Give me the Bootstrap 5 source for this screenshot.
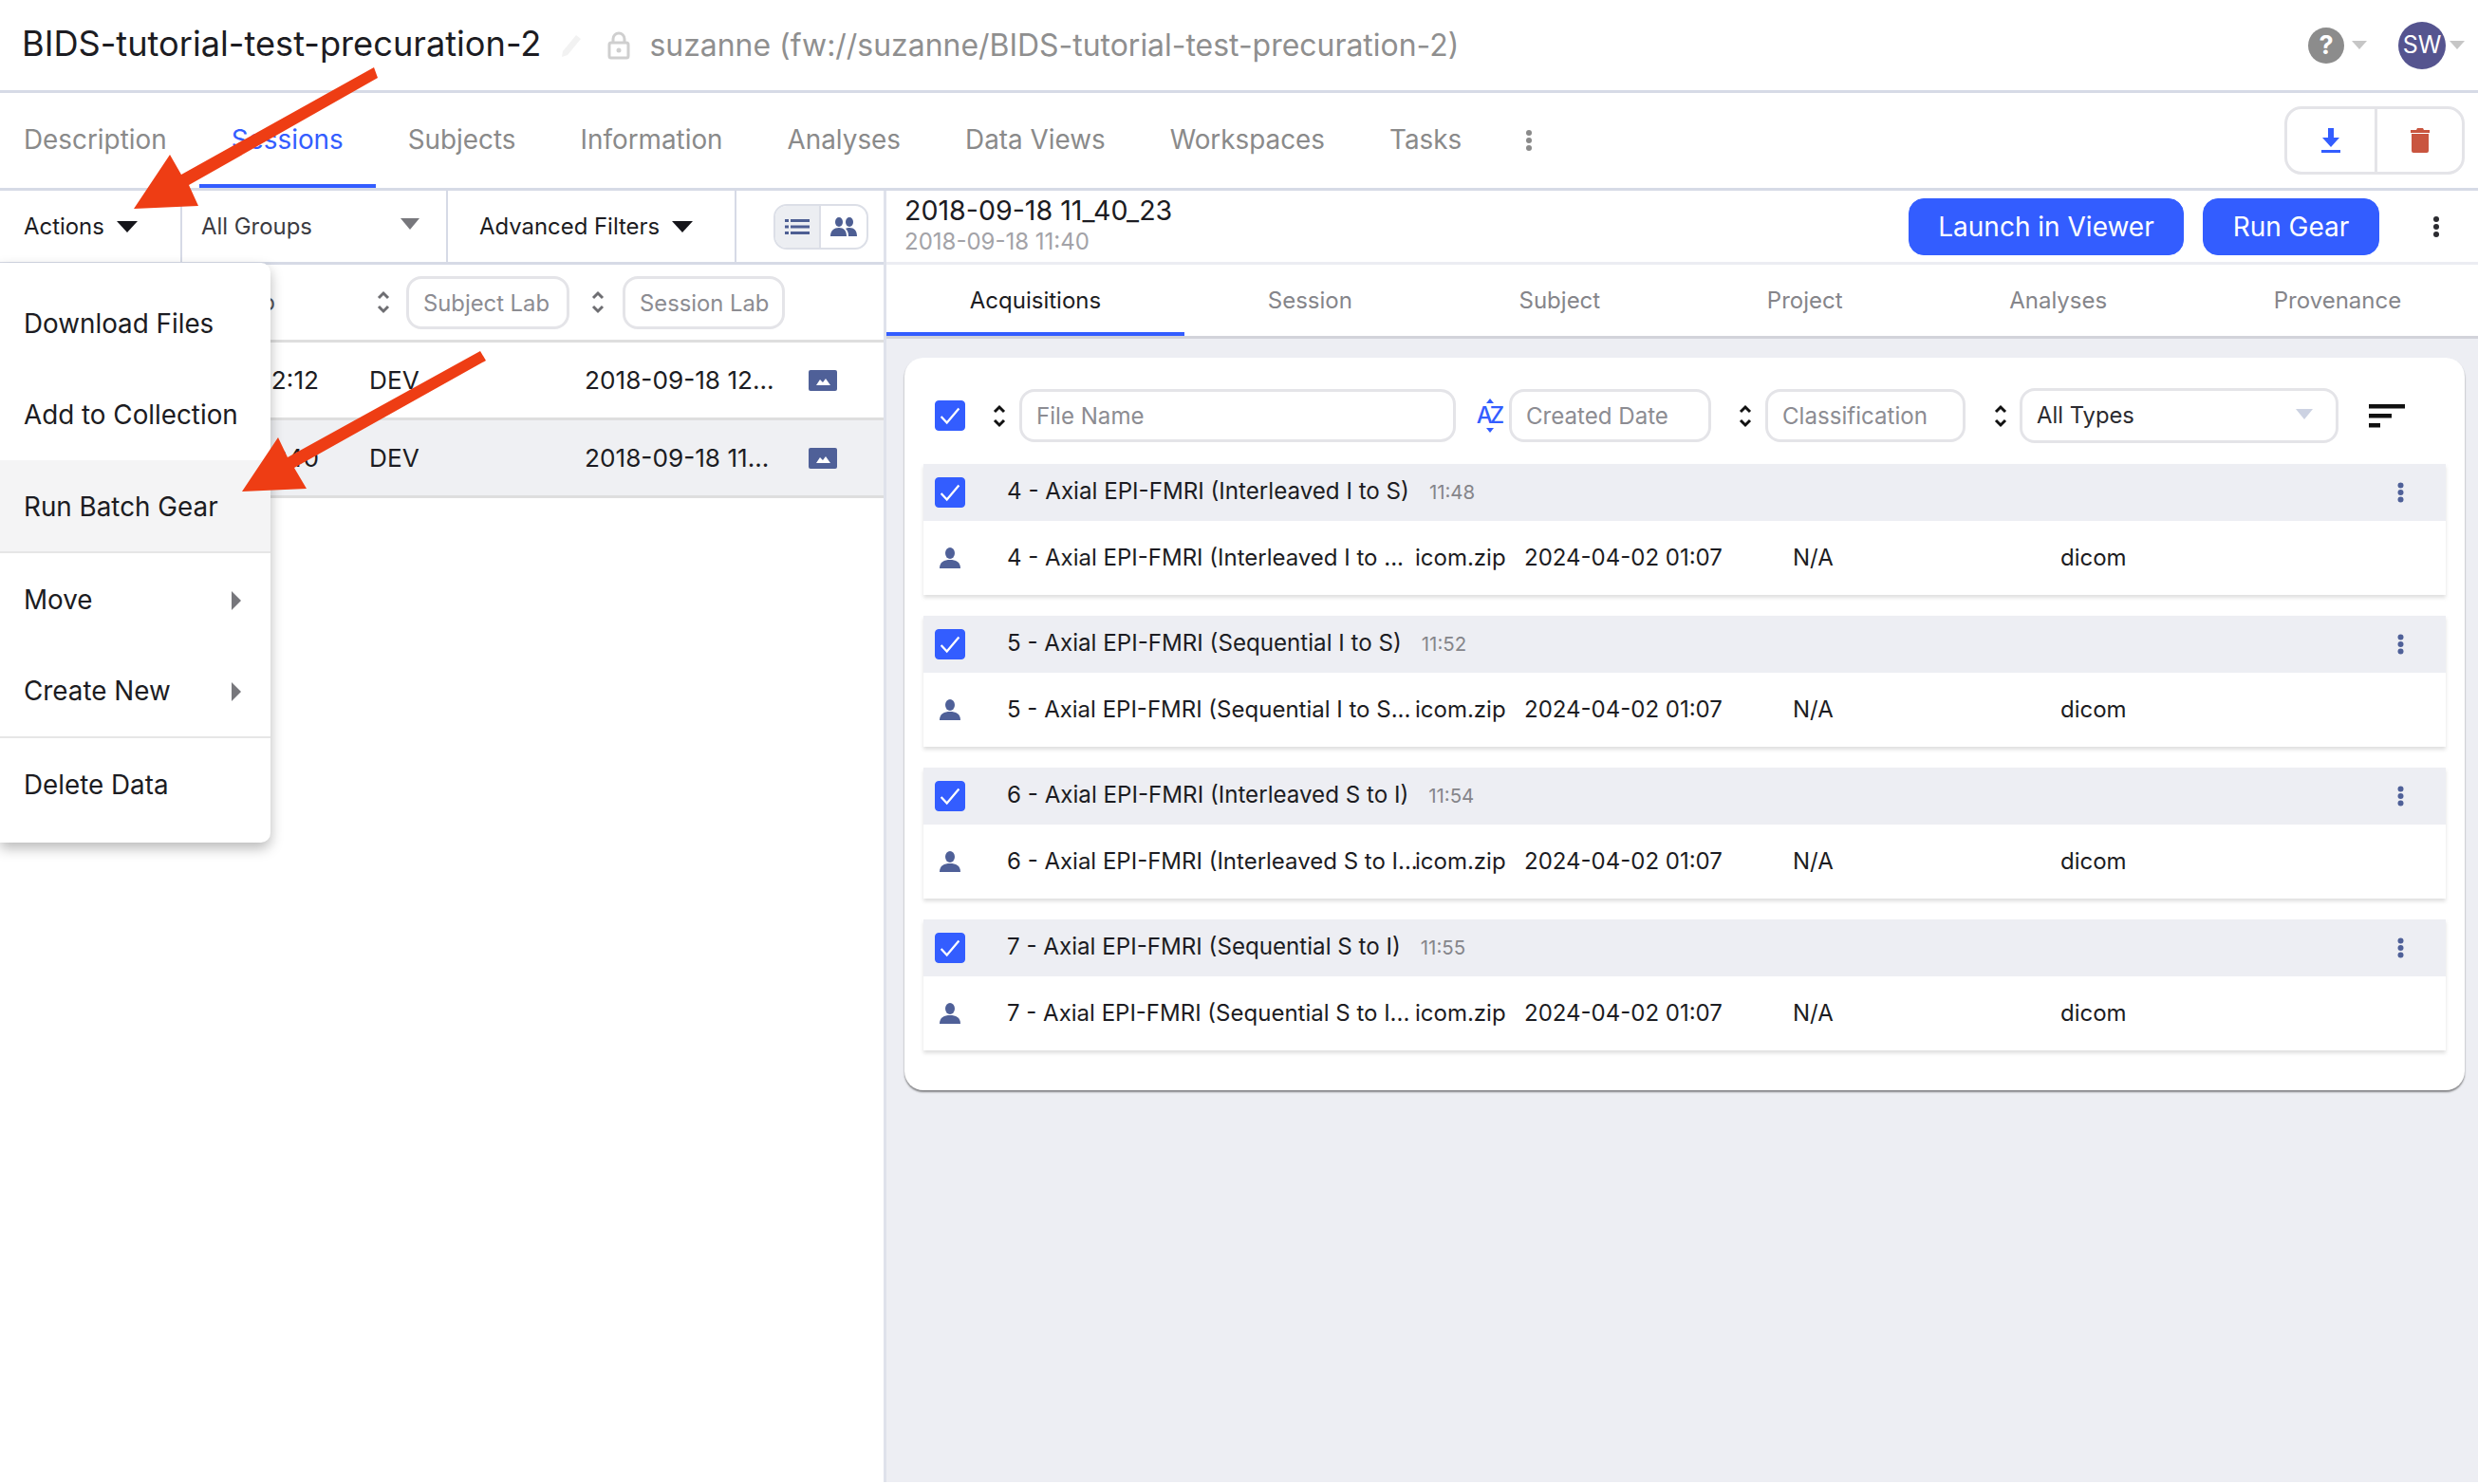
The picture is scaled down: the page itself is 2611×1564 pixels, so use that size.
<!DOCTYPE html>
<html lang="en">
<head>
<meta charset="utf-8">
<title>BIDS-tutorial-test-precuration-2</title>
<link href="https://cdn.jsdelivr.net/npm/bootstrap@5.3.0/dist/css/bootstrap.min.css" rel="stylesheet">
<style>
html,body{height:100%;}
body{font-family:Inter,"Noto Sans",sans-serif;color:#1c1c22;font-size:24px;width:2611px;height:1564px;overflow:hidden;background:#fff;}
.top-bar{height:98px;border-bottom:3px solid #d6dae6;padding-left:23px;}
.proj-title{font-size:36.2px;line-height:1;margin-bottom:3px;}
.proj-path{font-size:31.95px;color:#8f8f8f;line-height:1;}
.ic-pencil{margin-left:20px;}
.ic-lock{margin-left:26px;margin-right:20px;}
.help-dot{width:38px;height:38px;border-radius:50%;background:#8c8c8c;color:#fff;font-size:27px;font-weight:700;line-height:1;}
.mini-tri{width:0;height:0;border-left:8px solid transparent;border-right:8px solid transparent;border-top:9px solid #c6c6c6;}
.avatar-dot{width:50px;height:50px;border-radius:50%;background:#55548f;color:#fff;font-size:25px;line-height:1;}
.ml-b{margin-left:33px;}
.mr-a{margin-right:14px;}
.tab-bar{height:103px;border-bottom:3px solid #d6dae6;padding-left:25px;padding-right:14px;}
.tab-bar .nav-link{color:#8a8a8a;font-size:27.85px;padding:0 34px;height:100px;line-height:98px;border-bottom:4px solid transparent;}
.tab-bar .nav-item:first-child .nav-link{padding-left:0;}
.tab-bar .nav-link.active{color:#335dff;border-bottom-color:#335dff;}
.kebab-top{margin-left:33px;}
.act-group{border:3px solid #e4e4e8;border-radius:18px;height:72px;width:190px;}
.act-cell{width:50%;height:100%;}
.act-cell+.act-cell{border-left:3px solid #e4e4e8;}
.work{height:1361px;}
.left-col{width:934px;border-right:3px solid #dfe2eb;flex:none;}
.tool-row{height:78px;border-bottom:3px solid #d6dae6;font-size:23.9px;}
.tool-cell{height:100%;border-right:2px solid #d6dae6;}
.c-act{width:192px;padding-left:25px;}
.c-grp{width:280px;padding-left:20px;padding-right:28px;color:#3b3b42;}
.c-adv{width:304px;padding-left:33px;}
.tri-d{width:0;height:0;border-left:11px solid transparent;border-right:11px solid transparent;border-top:12px solid #15151a;margin-left:13px;}
.tri-g{border-left-width:10px;border-right-width:10px;border-top-color:#77777c;margin-bottom:6px;}
.view-tog{margin-left:39px;width:100px;height:48px;border:2px solid #dcdfe7;border-radius:14px;overflow:hidden;}
.view-tog>div{width:50%;height:100%;}
.view-on{background:#eceef2;border-right:2px solid #dcdfe7;}
.filter-row{height:82px;border-bottom:3px solid #dedede;}
.filter-lab{width:290px;text-align:right;margin-right:107px;color:#55555a;white-space:nowrap;}
.fld{border:3px solid #e4e4e8;border-radius:16px;height:56px;padding:2px 15px 0;font-size:24.1px;color:#8c8c92;background:#fff;width:auto;line-height:1;display:flex;align-items:center;white-space:nowrap;}
.fld-subj{width:172px;margin-left:17px;font-size:23.8px;}
.fld-sess{width:171px;margin-left:19px;font-size:23.8px;}
.sort-gap{margin-left:23px;}
.sess-row{height:82px;border-bottom:3px solid #dedede;display:grid;grid-template-columns:389px 227px 236px 30px;align-items:center;font-size:26.2px;}
.sess-row.picked{background:#eff0f3;}
.sess-time{text-align:right;padding-right:53px;white-space:nowrap;overflow:hidden;}
.act-menu{left:0;top:76px;width:285px;padding:15px 0 14px;border:0;border-radius:0 10px 10px 0;box-shadow:0 6px 14px rgba(0,0,0,.28);z-index:20;margin:0;}
.act-menu .dropdown-item{height:96.4px;padding:3px 31px 0 25px;font-size:27.8px;color:#1c1c22;display:flex;align-items:center;justify-content:space-between;}
.act-menu .dropdown-item.hovered{background:#f4f4f5;}
.act-menu .dropdown-divider{margin:0;border-top:2px solid #e6e6e6;opacity:1;}
.tri-r{width:0;height:0;border-top:10px solid transparent;border-bottom:10px solid transparent;border-left:10px solid #77777c;}
.right-col{background:#edeef3;min-width:0;overflow:hidden;}
.ses-head{height:78px;background:#fff;border-bottom:3px solid #ecedf2;padding-left:19px;padding-right:40px;}
.ses-id{margin-bottom:2px;}
.ses-name{font-size:28.6px;line-height:34px;}
.ses-date{font-size:24px;line-height:30px;color:#a3a3a8;margin-top:1px;}
.btn-go{background:#335dff;border-color:#335dff;border-radius:16px;height:60px;font-size:28px;padding:0;line-height:1;}
.btn-view{width:290px;}
.btn-run{width:186px;margin-left:20px;margin-right:56px;}
.sub-tabs{height:78px;width:calc(100% + 7px);background:#fff;border-bottom:3px solid #d2d3da;}
.sub-tabs .nav-link{color:#85858a;font-size:24px;height:75px;line-height:76px;padding:0;border-bottom:4px solid transparent;}
.sub-tabs .nav-link.active{color:#1c1c22;border-bottom-color:#335dff;}
.acq-card{margin:20px 14px 0 19px;padding:0 20px 42px;border:0;border-radius:20px;box-shadow:0 2px 2px rgba(0,0,0,.45);background:#fff;}
.acq-filter{height:112px;padding-left:12px;padding-top:10px;}
.form-check-input.tick{width:32px;height:32px;margin:0;border-radius:4px;background-color:#335dff;border-color:#335dff;background-size:100% 100%;background-image:url("data:image/svg+xml,%3csvg xmlns='http://www.w3.org/2000/svg' viewBox='0 0 32 32'%3e%3cpath fill='none' stroke='%23fff' stroke-width='2.4' d='M6 17l6.500 7L26 8'/%3e%3c/svg%3e");flex:none;}
.s-arrow{margin-left:29px;}
.fld-file{width:460px;margin-left:14px;}
.az-mark{width:30px;margin-left:20px;font-size:24px;line-height:1;letter-spacing:-3px;color:#335dff;position:relative;text-align:center;font-weight:500;white-space:nowrap;}
.az-mark::before,.az-mark::after{content:"";position:absolute;left:12px;width:0;height:0;border-left:4px solid transparent;border-right:4px solid transparent;}
.az-mark::before{top:-6px;border-bottom:5px solid #335dff;}
.az-mark::after{bottom:-6px;border-top:5px solid #335dff;}
.fld-date{width:213px;margin-left:6px;}
.fld-class{width:211px;margin-left:14px;}
.arr-gap1{margin-left:29px;}
.arr-gap2{margin-left:30px;}
.fld-type{width:336px;height:58px;margin-left:13px;color:#2b2b30;justify-content:space-between;padding:0 24px 0 15px;font-size:23.8px;}
.tri-pale{width:0;height:0;border-left:9px solid transparent;border-right:9px solid transparent;border-top:11px solid #ccd2e2;margin-bottom:4px;}
.lines-ic{margin-left:32px;}
.acq-box{margin-bottom:22px;box-shadow:0 3px 4px rgba(0,0,0,.13);background:#fff;}
.acq-box:last-child{margin-bottom:0;}
.acq-top{height:60px;background:#edeef3;padding:0 44px 0 12px;}
.acq-title{margin-left:44px;font-size:24.15px;margin-bottom:2px;}
.acq-time{margin-left:21px;font-size:20.4px;color:#85858a;}
.acq-line{height:78px;display:grid;grid-template-columns:88px 430px 115px 283px 282px 1fr;align-items:center;font-size:24px;white-space:nowrap;}
.acq-line svg{margin-left:17px;}
.arrow-layer{left:0;top:0;z-index:50;pointer-events:none;}
</style>
</head>
<body class="position-relative">

<header class="top-bar d-flex align-items-center">
  <span class="proj-title">BIDS-tutorial-test-precuration-2</span>
  <svg class="ic-pencil" width="24" height="26" viewBox="0 0 24 26"><path fill="#f2f2f2" d="M17 2l5 4L8 23l-6 2 1-6z"/></svg>
  <svg class="ic-lock" width="24" height="30" viewBox="0 0 24 30"><path fill="none" stroke="#cfcfcf" stroke-width="3" d="M6 12V8a6 6 0 0 1 12 0v4"/><rect x="2" y="12" width="20" height="16" rx="2" fill="none" stroke="#cfcfcf" stroke-width="3"/><circle cx="12" cy="20" r="2.5" fill="#cfcfcf"/></svg>
  <span class="proj-path">suzanne (fw://suzanne/BIDS-tutorial-test-precuration-2)</span>
  <div class="ms-auto d-flex align-items-center mr-a">
    <span class="help-dot d-flex align-items-center justify-content-center">?</span>
    <span class="mini-tri ms-2"></span>
    <span class="avatar-dot d-flex align-items-center justify-content-center ml-b">SW</span>
    <span class="mini-tri ms-1"></span>
  </div>
</header>

<nav class="tab-bar d-flex align-items-center">
  <ul class="nav">
    <li class="nav-item"><a class="nav-link" href="#">Description</a></li>
    <li class="nav-item"><a class="nav-link active" href="#">Sessions</a></li>
    <li class="nav-item"><a class="nav-link" href="#">Subjects</a></li>
    <li class="nav-item"><a class="nav-link" href="#">Information</a></li>
    <li class="nav-item"><a class="nav-link" href="#">Analyses</a></li>
    <li class="nav-item"><a class="nav-link" href="#">Data Views</a></li>
    <li class="nav-item"><a class="nav-link" href="#">Workspaces</a></li>
    <li class="nav-item"><a class="nav-link" href="#">Tasks</a></li>
  </ul>
  <svg class="kebab-top" width="8" height="24" viewBox="0 0 8 24"><g fill="#8a8a8a"><circle cx="4" cy="4" r="3"/><circle cx="4" cy="12" r="3"/><circle cx="4" cy="20" r="3"/></g></svg>
  <div class="act-group d-flex ms-auto">
    <div class="act-cell d-flex align-items-center justify-content-center">
      <svg width="22" height="26" viewBox="0 0 22 26"><path fill="#335dff" d="M8 0h6v10h6l-9 10-9-10h6zM1 23h20v3H1z"/></svg>
    </div>
    <div class="act-cell d-flex align-items-center justify-content-center">
      <svg width="20" height="26" viewBox="0 0 20 26"><path fill="#c9553f" d="M7 0h6l1 2h6v3H0V2h6zM1 6h18v18a2 2 0 0 1-2 2H3a2 2 0 0 1-2-2z"/></svg>
    </div>
  </div>
</nav>

<main class="work d-flex">
  <section class="left-col position-relative">
    <div class="tool-row d-flex align-items-center">
      <div class="tool-cell c-act d-flex align-items-center">Actions<span class="tri-d"></span></div>
      <div class="tool-cell c-grp d-flex align-items-center justify-content-between">All Groups<span class="tri-d tri-g"></span></div>
      <div class="tool-cell c-adv d-flex align-items-center">Advanced Filters<span class="tri-d"></span></div>
      <div class="view-tog d-flex">
        <div class="view-on d-flex align-items-center justify-content-center">
          <svg width="26" height="16" viewBox="0 0 26 16"><g fill="#4d5e93"><rect width="4" height="3"/><rect x="6" width="20" height="3"/><rect y="6.5" width="4" height="3"/><rect x="6" y="6.5" width="20" height="3"/><rect y="13" width="4" height="3"/><rect x="6" y="13" width="20" height="3"/></g></svg>
        </div>
        <div class="d-flex align-items-center justify-content-center">
          <svg width="30" height="20" viewBox="0 0 30 20"><g fill="#4d5e93"><ellipse cx="10" cy="5" rx="4" ry="5"/><ellipse cx="21" cy="5" rx="4" ry="5"/><path d="M1 20c0-6 4-9 9-9s8 3 8 9zM20 20c0-4-1-6-3-8 1-1 3-1 4-1 5 0 8 3 8 9z"/></g></svg>
        </div>
      </div>
    </div>
    <div class="filter-row d-flex align-items-center">
      <span class="filter-lab">Group</span>
      <svg width="14" height="25" viewBox="0 0 14 25"><path fill="none" stroke="#6e6e72" stroke-width="3" d="M2 8l5-5 5 5M2 17l5 5 5-5"/></svg>
      <span class="fld fld-subj">Subject Lab</span>
      <svg class="sort-gap" width="14" height="25" viewBox="0 0 14 25"><path fill="none" stroke="#6e6e72" stroke-width="3" d="M2 8l5-5 5 5M2 17l5 5 5-5"/></svg>
      <span class="fld fld-sess">Session Lab</span>
    </div>
    <div class="sess-row">
      <span class="sess-time">2018-09-18 12:12</span><span>DEV</span><span>2018-09-18 12...</span>
      <svg width="30" height="22" viewBox="0 0 30 22"><rect width="30" height="22" rx="2" fill="#4f6098"/><path fill="#fff" d="M8 16l4-6 3 3 3-4 5 7z"/></svg>
    </div>
    <div class="sess-row picked">
      <span class="sess-time">2018-09-18 11:40</span><span>DEV</span><span>2018-09-18 11...</span>
      <svg width="30" height="22" viewBox="0 0 30 22"><rect width="30" height="22" rx="2" fill="#4f6098"/><path fill="#fff" d="M8 16l4-6 3 3 3-4 5 7z"/></svg>
    </div>
    <ul class="dropdown-menu show position-absolute act-menu">
      <li><a class="dropdown-item" href="#">Download Files</a></li>
      <li><a class="dropdown-item" href="#">Add to Collection</a></li>
      <li><a class="dropdown-item hovered" href="#">Run Batch Gear</a></li>
      <li><hr class="dropdown-divider"></li>
      <li><a class="dropdown-item" href="#">Move<span class="tri-r"></span></a></li>
      <li><a class="dropdown-item" href="#">Create New<span class="tri-r"></span></a></li>
      <li><hr class="dropdown-divider"></li>
      <li><a class="dropdown-item" href="#">Delete Data</a></li>
    </ul>
  </section>

  <section class="right-col flex-grow-1">
    <div class="ses-head d-flex align-items-center">
      <div class="ses-id">
        <div class="ses-name">2018-09-18 11_40_23</div>
        <div class="ses-date">2018-09-18 11:40</div>
      </div>
      <button class="btn btn-primary btn-go btn-view ms-auto">Launch in Viewer</button>
      <button class="btn btn-primary btn-go btn-run">Run Gear</button>
      <svg width="8" height="24" viewBox="0 0 8 24"><g fill="#2b2b30"><circle cx="4" cy="4" r="3"/><circle cx="4" cy="12" r="3"/><circle cx="4" cy="20" r="3"/></g></svg>
    </div>
    <ul class="nav nav-fill sub-tabs">
      <li class="nav-item"><a class="nav-link active" href="#">Acquisitions</a></li>
      <li class="nav-item"><a class="nav-link" href="#">Session</a></li>
      <li class="nav-item"><a class="nav-link" href="#">Subject</a></li>
      <li class="nav-item"><a class="nav-link" href="#">Project</a></li>
      <li class="nav-item"><a class="nav-link" href="#">Analyses</a></li>
      <li class="nav-item"><a class="nav-link" href="#">Provenance</a></li>
    </ul>
    <div class="card acq-card">
      <div class="acq-filter d-flex align-items-center">
        <input class="form-check-input tick" type="checkbox" checked>
        <svg class="s-arrow" width="14" height="25" viewBox="0 0 14 25"><path fill="none" stroke="#111" stroke-width="3" d="M2 8l5-5 5 5M2 17l5 5 5-5"/></svg>
        <span class="fld fld-file">File Name</span>
        <span class="az-mark">AZ</span>
        <span class="fld fld-date">Created Date</span>
        <svg class="arr-gap1" width="14" height="25" viewBox="0 0 14 25"><path fill="none" stroke="#111" stroke-width="3" d="M2 8l5-5 5 5M2 17l5 5 5-5"/></svg>
        <span class="fld fld-class">Classification</span>
        <svg class="arr-gap2" width="14" height="25" viewBox="0 0 14 25"><path fill="none" stroke="#111" stroke-width="3" d="M2 8l5-5 5 5M2 17l5 5 5-5"/></svg>
        <span class="fld fld-type">All Types<span class="tri-pale"></span></span>
        <svg class="lines-ic" width="38" height="25" viewBox="0 0 38 25"><g fill="#111"><rect width="38" height="4.5"/><rect y="10" width="24" height="4.5"/><rect y="20" width="12" height="4.5"/></g></svg>
      </div>

      <div class="acq-box">
        <div class="acq-top d-flex align-items-center">
          <input class="form-check-input tick" type="checkbox" checked>
          <span class="acq-title">4 - Axial EPI-FMRI (Interleaved I to S)</span><span class="acq-time">11:48</span>
          <svg class="ms-auto" width="7" height="22" viewBox="0 0 7 22"><g fill="#4f6098"><circle cx="3.5" cy="3.5" r="3"/><circle cx="3.5" cy="11" r="3"/><circle cx="3.5" cy="18.500" r="3"/></g></svg>
        </div>
        <div class="acq-line">
          <svg width="22" height="22" viewBox="0 0 22 22"><g fill="#4f6098"><ellipse cx="11" cy="6" rx="5" ry="6"/><path d="M0 22c0-7 5-9 11-9s11 2 11 9z"/></g></svg>
          <span>4 - Axial EPI-FMRI (Interleaved I to ...</span><span>icom.zip</span><span>2024-04-02 01:07</span><span>N/A</span><span>dicom</span>
        </div>
      </div>

      <div class="acq-box">
        <div class="acq-top d-flex align-items-center">
          <input class="form-check-input tick" type="checkbox" checked>
          <span class="acq-title">5 - Axial EPI-FMRI (Sequential I to S)</span><span class="acq-time">11:52</span>
          <svg class="ms-auto" width="7" height="22" viewBox="0 0 7 22"><g fill="#4f6098"><circle cx="3.5" cy="3.5" r="3"/><circle cx="3.5" cy="11" r="3"/><circle cx="3.5" cy="18.500" r="3"/></g></svg>
        </div>
        <div class="acq-line">
          <svg width="22" height="22" viewBox="0 0 22 22"><g fill="#4f6098"><ellipse cx="11" cy="6" rx="5" ry="6"/><path d="M0 22c0-7 5-9 11-9s11 2 11 9z"/></g></svg>
          <span>5 - Axial EPI-FMRI (Sequential I to S...</span><span>icom.zip</span><span>2024-04-02 01:07</span><span>N/A</span><span>dicom</span>
        </div>
      </div>

      <div class="acq-box">
        <div class="acq-top d-flex align-items-center">
          <input class="form-check-input tick" type="checkbox" checked>
          <span class="acq-title">6 - Axial EPI-FMRI (Interleaved S to I)</span><span class="acq-time">11:54</span>
          <svg class="ms-auto" width="7" height="22" viewBox="0 0 7 22"><g fill="#4f6098"><circle cx="3.5" cy="3.5" r="3"/><circle cx="3.5" cy="11" r="3"/><circle cx="3.5" cy="18.500" r="3"/></g></svg>
        </div>
        <div class="acq-line">
          <svg width="22" height="22" viewBox="0 0 22 22"><g fill="#4f6098"><ellipse cx="11" cy="6" rx="5" ry="6"/><path d="M0 22c0-7 5-9 11-9s11 2 11 9z"/></g></svg>
          <span>6 - Axial EPI-FMRI (Interleaved S to I...</span><span>icom.zip</span><span>2024-04-02 01:07</span><span>N/A</span><span>dicom</span>
        </div>
      </div>

      <div class="acq-box">
        <div class="acq-top d-flex align-items-center">
          <input class="form-check-input tick" type="checkbox" checked>
          <span class="acq-title">7 - Axial EPI-FMRI (Sequential S to I)</span><span class="acq-time">11:55</span>
          <svg class="ms-auto" width="7" height="22" viewBox="0 0 7 22"><g fill="#4f6098"><circle cx="3.5" cy="3.5" r="3"/><circle cx="3.5" cy="11" r="3"/><circle cx="3.5" cy="18.500" r="3"/></g></svg>
        </div>
        <div class="acq-line">
          <svg width="22" height="22" viewBox="0 0 22 22"><g fill="#4f6098"><ellipse cx="11" cy="6" rx="5" ry="6"/><path d="M0 22c0-7 5-9 11-9s11 2 11 9z"/></g></svg>
          <span>7 - Axial EPI-FMRI (Sequential S to I...</span><span>icom.zip</span><span>2024-04-02 01:07</span><span>N/A</span><span>dicom</span>
        </div>
      </div>
    </div>
  </section>
</main>

<svg class="arrow-layer position-absolute" width="2611" height="1564" viewBox="0 0 2611 1564">
  <path fill="#ee3d14" d="M394 71L398 82L199 195L209 217L141 220L179 163L191 184Z"/>
  <path fill="#ee3d14" d="M506 370L512 380L310 493L323 515L255 518L293 461L303 482Z"/>
</svg>

<script src="https://cdn.jsdelivr.net/npm/bootstrap@5.3.0/dist/js/bootstrap.bundle.min.js"></script>
</body>
</html>
